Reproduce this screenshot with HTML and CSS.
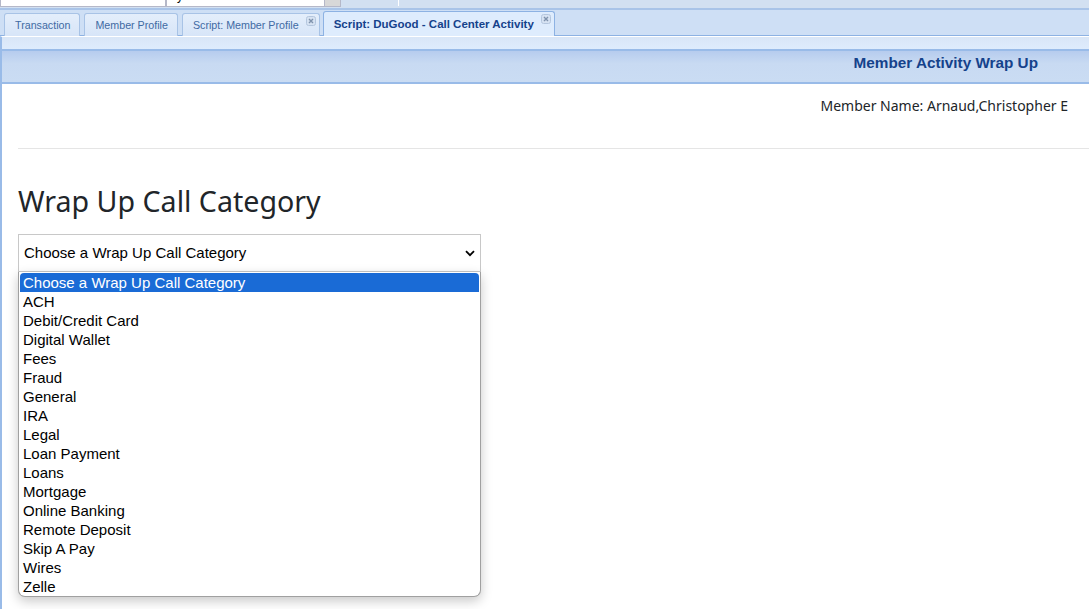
FILE: index.html
```html
<!DOCTYPE html>
<html>
<head>
<meta charset="utf-8">
<link rel="stylesheet" href="styles.css">
</head>
<body>
<div class="topbar">
  <div class="field f1"><span>Search</span></div>
  <div class="field f2"><span>By Name</span></div>
  <div class="trigger"></div>
  <div class="sep"></div>
</div>
<div class="tabstrip">
  <div class="tab">Transaction</div>
  <div class="tab">Member Profile</div>
  <div class="tab closable">Script: Member Profile<span class="x">
    <svg width="10" height="10" viewBox="0 0 10 10"><rect x="0.5" y="0.5" width="9" height="9" rx="2" fill="#d6e2f2" stroke="#b4c6de"/><path d="M3 3L7 7M7 3L3 7" stroke="#7f93ad" stroke-width="1.4"/></svg></span></div>
  <div class="tab active closable">Script: DuGood - Call Center Activity<span class="x">
    <svg width="10" height="10" viewBox="0 0 10 10"><rect x="0.5" y="0.5" width="9" height="9" rx="2" fill="#d6e2f2" stroke="#b4c6de"/><path d="M3 3L7 7M7 3L3 7" stroke="#7f93ad" stroke-width="1.4"/></svg></span></div>
</div>
<div class="tabspacer"></div>
<div class="panel">
  <div class="panel-header">Member Activity Wrap Up</div>
  <div class="panel-body">
    <div class="member">Member Name: Arnaud,Christopher E</div>
    <div class="rule"></div>
    <h1 class="title">Wrap Up Call Category</h1>
    <div class="selectwrap">
      <div class="select">
        <span>Choose a Wrap Up Call Category</span>
        <svg class="chev" width="10" height="7" viewBox="0 0 10 7"><path d="M1 1.2L5 5.2L9 1.2" fill="none" stroke="#000" stroke-width="1.8"/></svg>
      </div>
      <ul class="options">
        <li class="sel">Choose a Wrap Up Call Category</li>
        <li>ACH</li>
        <li>Debit/Credit Card</li>
        <li>Digital Wallet</li>
        <li>Fees</li>
        <li>Fraud</li>
        <li>General</li>
        <li>IRA</li>
        <li>Legal</li>
        <li>Loan Payment</li>
        <li>Loans</li>
        <li>Mortgage</li>
        <li>Online Banking</li>
        <li>Remote Deposit</li>
        <li>Skip A Pay</li>
        <li>Wires</li>
        <li>Zelle</li>
      </ul>
    </div>
  </div>
</div>
</body>
</html>
```
FILE: styles.css
```css
html, body {
  margin: 0;
  padding: 0;
  background: #fff;
  overflow: hidden;
  height: 609px;
}
body {
  font-family: "Liberation Sans", Arial, sans-serif;
  display: flex;
  flex-direction: column;
}
.topbar {
  height: 8px;
  flex: none;
  background: #d2e0f1;
  display: flex;
  position: relative;
  overflow: hidden;
  border-bottom: 2px solid #a9c4e8;
}
.field {
  background: #fff;
  border: 1px solid #b5b8c8;
  border-top: none;
  height: 6px;
  position: relative;
  overflow: hidden;
}
.field span {
  position: absolute;
  left: 2px;
  top: -11px;
  font-size: 12px;
  line-height: 14px;
  color: #000;
}
.f1 { width: 164px; }
.f2 { width: 157px; }
.trigger {
  width: 15px;
  height: 6px;
  background: #d8d8d8;
  border-right: 1px solid #b5b8c8;
  border-bottom: 1px solid #b5b8c8;
}
.sep {
  width: 1px;
  height: 6px;
  background: #fff;
  margin-left: 57px;
}
.tabstrip {
  flex: none;
  background: #cedff5;
  display: flex;
  align-items: flex-end;
  padding-left: 4px;
  gap: 4px;
  border-bottom: 1px solid #8db2e3;
  box-sizing: border-box;
  height: 26px;
}
.tab {
  height: 23px;
  box-sizing: border-box;
  border: 1px solid #a8c3e6;
  border-bottom: none;
  border-radius: 3px 3px 0 0;
  background: linear-gradient(#e4eefb, #d7e5f8);
  font-size: 10.7px;
  color: #416aa3;
  padding: 0 9px 0 10px;
  display: flex;
  align-items: center;
  position: relative;
  top: 1px;
}
.tab.closable { padding-right: 20px; }
.tab .x {
  position: absolute;
  right: 3px;
  top: 2px;
  line-height: 0;
}
.tab.active {
  background: #deecfd;
  color: #15428b;
  font-weight: bold;
  font-size: 11.5px;
  height: 25px;
  border-color: #8db2e3;
  margin-left: -1px;
}
.tabspacer {
  flex: none;
  height: 12px;
  background: linear-gradient(#d9e6f7, #deecfd);
  border-left: 2px solid #99bbe8;
  border-bottom: 2px solid #99bbe8;
  border-top: 1px solid #fff;
}
.panel {
  flex: 1;
  border-left: 2px solid #99bbe8;
}
.panel-header {
  height: 33px;
  box-sizing: border-box;
  background: linear-gradient(#b6ccee, #c8daf2 40%, #cadcf3);
  border-bottom: 2px solid #99bbe8;
  font-size: 15.3px;
  font-weight: bold;
  color: #15428b;
  display: flex;
  align-items: flex-start;
  justify-content: flex-end;
  padding-right: 51px;
  padding-top: 3px;
}
.panel-body {
  padding: 0 0 0 16px;
}
.member {
  font-family: "Noto Sans", "Open Sans", sans-serif;
  font-size: 14px;
  color: #212529;
  text-align: right;
  padding-right: 21px;
  padding-top: 12px;
  height: 38px;
}
.rule {
  border-top: 1px solid #e5e5e5;
  margin-top: 14px;
}
.title {
  font-family: "Noto Sans", "Open Sans", sans-serif;
  font-weight: normal;
  font-size: 28.6px;
  color: #212529;
  margin: 34px 0 0 0;
  line-height: 36px;
}
.selectwrap {
  position: relative;
  width: 463px;
  margin-top: 15px;
}
.select {
  height: 38px;
  box-sizing: border-box;
  border: 1px solid #c8c8c8;
  display: flex;
  align-items: center;
  justify-content: space-between;
  padding: 0 3px 0 5px;
  font-size: 15px;
  color: #000;
}
.select span { position: relative; top: -1px; }
.chev { margin-right: 2px; }
.options {
  position: absolute;
  left: 0;
  top: 38px;
  width: 463px;
  box-sizing: border-box;
  margin: 0;
  padding: 1px 1px 0 1px;
  list-style: none;
  background: #fff;
  border: 1px solid #a0a0a0;
  border-top: none;
  border-radius: 0 0 7px 7px;
  box-shadow: 0 4px 12px rgba(0,0,0,0.22);
}
.options li {
  height: 19px;
  line-height: 19px;
  font-size: 15px;
  color: #000;
  padding-left: 3px;
}
.options li.sel {
  background: #1a6bd6;
  color: #fff;
  border-radius: 4px 4px 0 0;
}
```
